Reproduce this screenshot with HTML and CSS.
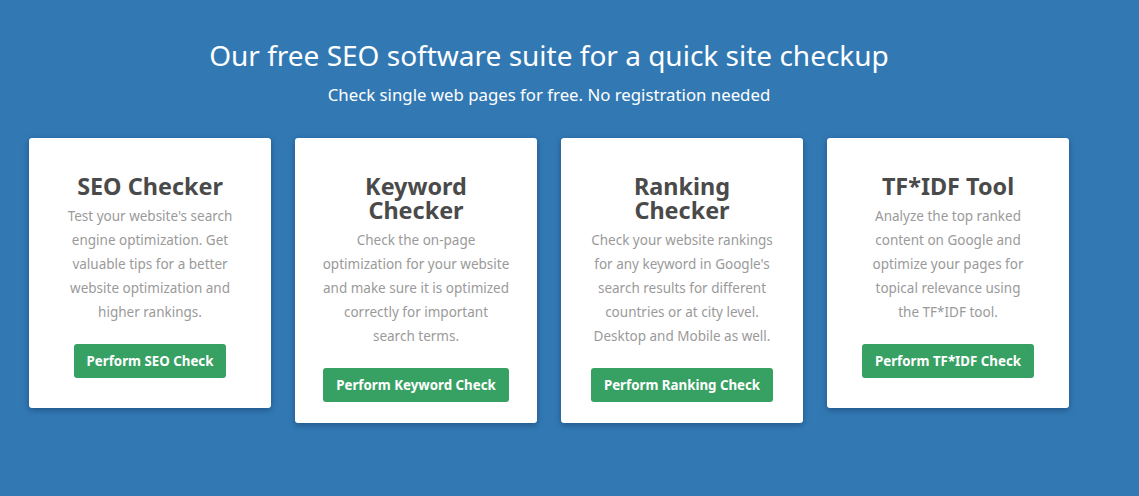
FILE: index.html
```html
<!DOCTYPE html>
<html lang="en">
<head>
<meta charset="utf-8">
<title>SEO software suite</title>
<link rel="stylesheet" href="styles.css">
</head>
<body>
<section class="suite">
  <header class="suite-head">
    <h1 class="suite-title">Our free SEO software suite for a quick site checkup</h1>
    <p class="suite-sub">Check single web pages for free. No registration needed</p>
  </header>
  <div class="cards">
    <div class="card">
      <h2 class="card-title">SEO Checker</h2>
      <p class="card-text">Test your website's search engine optimization. Get valuable tips for a better website optimization and higher rankings.</p>
      <a class="btn" href="#">Perform SEO Check</a>
    </div>
    <div class="card">
      <h2 class="card-title">Keyword<br>Checker</h2>
      <p class="card-text">Check the on-page optimization for your website and make sure it is optimized correctly for important search&nbsp;terms.</p>
      <a class="btn" href="#">Perform Keyword Check</a>
    </div>
    <div class="card">
      <h2 class="card-title">Ranking<br>Checker</h2>
      <p class="card-text">Check your website rankings for any keyword in Google's search results for different countries or at city level. Desktop and Mobile as well.</p>
      <a class="btn" href="#">Perform Ranking Check</a>
    </div>
    <div class="card">
      <h2 class="card-title">TF*IDF Tool</h2>
      <p class="card-text">Analyze the top ranked content on Google and optimize your pages for topical relevance using the&nbsp;TF*IDF tool.</p>
      <a class="btn" href="#">Perform TF*IDF Check</a>
    </div>
  </div>
</section>
</body>
</html>
```
FILE: styles.css
```css
html, body {
  margin: 0;
  padding: 0;
}
body {
  background: #3279b4;
  font-family: "Noto Sans", "Open Sans", sans-serif;
  width: 1139px;
  height: 496px;
  overflow: hidden;
}
.suite {
  padding: 36px 0 0 29px;
  width: 1040px;
}
.suite-head {
  text-align: center;
  color: #fff;
}
.suite-title {
  margin: 0;
  font-size: 28px;
  font-weight: 400;
  line-height: 38px;
}
.suite-sub {
  margin: 2px 0 0;
  font-size: 16.8px;
  line-height: 38px;
}
.cards {
  display: flex;
  align-items: flex-start;
  gap: 24px;
  margin-top: 24px;
}
.card {
  width: 242px;
  min-height: 270px;
  box-sizing: border-box;
  background: #fff;
  border-radius: 3px;
  box-shadow: 0 2px 6px rgba(10, 40, 80, 0.45);
  padding: 36px 26px 21px;
  text-align: center;
  display: flex;
  flex-direction: column;
  align-items: center;
}
.card-title {
  margin: 0;
  font-size: 23.4px;
  line-height: 24px;
  font-weight: 700;
  color: #4a4a4a;
}
.card-text {
  margin: 6px 0 0;
  font-size: 13.5px;
  line-height: 24px;
  color: #9a9a9a;
}
.btn {
  margin-top: 20px;
  display: inline-block;
  background: #37a163;
  color: #fff;
  font-size: 13.3px;
  font-weight: 700;
  line-height: 34px;
  height: 34px;
  padding: 0 13px;
  border-radius: 3px;
  text-decoration: none;
}
```
